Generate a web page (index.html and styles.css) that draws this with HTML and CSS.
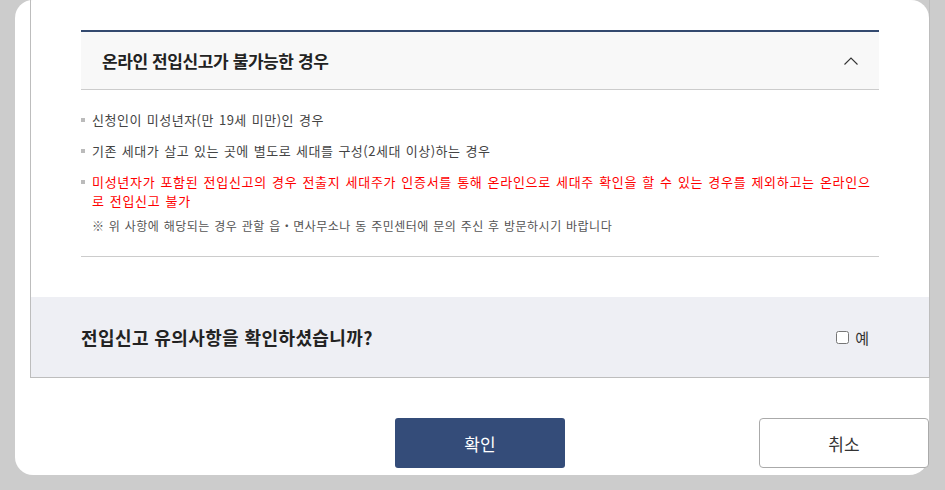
FILE: index.html
```html
<!DOCTYPE html>
<html lang="ko">
<head>
    <meta charset="UTF-8">
    <meta name="viewport" content="width=device-width, initial-scale=1.0">
    <title>전입신고 유의사항</title>
    <link rel="stylesheet" href="styles.css">
</head>
<body>
    <div class="modal">
        <div class="scroll-box">
            <div class="notice">
                <!-- Accordion header -->
                <div class="acc-head">
                    <h3 class="acc-title">온라인 전입신고가 불가능한 경우</h3>
                    <svg class="acc-arrow" width="14" height="8" viewBox="0 0 14 8">
                        <polyline points="0.5,7.5 7,1 13.5,7.5" fill="none" stroke="#333" stroke-width="1.1"/>
                    </svg>
                </div>

                <!-- Accordion body -->
                <div class="acc-body">
                    <ul class="case-list">
                        <li>신청인이 미성년자(만 19세 미만)인 경우</li>
                        <li>기존 세대가 살고 있는 곳에 별도로 세대를 구성(2세대 이상)하는 경우</li>
                        <li class="warn">미성년자가 포함된 전입신고의 경우 전출지 세대주가 인증서를 통해 온라인으로 세대주 확인을 할 수 있는 경우를 제외하고는 온라인으로 전입신고 불가</li>
                    </ul>
                    <p class="case-note">※ 위 사항에 해당되는 경우 관할 읍・면사무소나 동 주민센터에 문의 주신 후 방문하시기 바랍니다</p>
                </div>
            </div>

            <div class="confirm">
                <p class="confirm-text">전입신고 유의사항을 확인하셨습니까?</p>
                <label class="confirm-check">
                    <input type="checkbox">
                    <span>예</span>
                </label>
            </div>
        </div>

        <div class="btn-row">
            <button class="btn btn-ok" type="button">확인</button>
            <button class="btn btn-cancel" type="button">취소</button>
        </div>
    </div>
</body>
</html>
```

FILE: styles.css
```css
* {
    margin: 0;
    padding: 0;
    box-sizing: border-box;
}

html, body {
    font-family: "Noto Sans CJK KR", "Noto Sans", sans-serif;
    background: #cccccc;
    color: #333;
    overflow: hidden;
}

.modal {
    margin: 15px 0 0 15px;
    width: 914px;
    background: #fff;
    border-radius: 18px 18px 20px 18px;
    padding-bottom: 7px;
}

/* inner scrolled area, its top runs past the modal edge */
.scroll-box {
    margin: -15px 0 0 15px;
    width: 900px;
    border: 1px solid #bdbdbd;
    border-top: none;
}

.notice {
    padding: 30px 50px 40px;
}

.acc-head {
    display: flex;
    align-items: center;
    justify-content: space-between;
    height: 60px;
    padding: 0 21px;
    background: #f8f8f8;
    border-top: 2px solid #33496f;
    border-bottom: 1px solid #cccccc;
}

.acc-title {
    font-size: 17px;
    font-weight: 700;
    color: #222;
    letter-spacing: -0.4px;
}

.acc-arrow {
    display: block;
}

.acc-body {
    padding: 20px 0 22px;
    border-bottom: 1px solid #cccccc;
}

.case-list {
    list-style: none;
}

.case-list li {
    display: flex;
    gap: 7px;
    font-size: 13px;
    line-height: 19px;
    letter-spacing: 0.5px;
    word-spacing: 0.8px;
    color: #444;
}

.case-list li + li {
    margin-top: 12px;
}

.case-list li::before {
    content: "";
    flex-shrink: 0;
    width: 4px;
    height: 4px;
    margin-top: 7.5px;
    background: #bbbbbb;
}

.case-list li.warn {
    color: #ff0000;
    letter-spacing: 0.7px;
    word-break: break-all;
}

.case-note {
    margin-top: 7px;
    padding-left: 11px;
    font-size: 12px;
    line-height: 17px;
    letter-spacing: 0.5px;
    word-spacing: 0.5px;
    color: #555;
}

.confirm {
    display: flex;
    align-items: center;
    justify-content: space-between;
    height: 80px;
    padding: 0 60px 0 50px;
    background: #eeeff4;
}

.confirm-text {
    font-size: 18px;
    font-weight: 700;
    letter-spacing: 0.4px;
    color: #222;
}

.confirm-check {
    display: flex;
    align-items: center;
    gap: 6px;
    font-size: 15px;
    color: #333;
}

.confirm-check input {
    margin: 0;
    width: 13px;
    height: 13px;
}

.btn-row {
    display: flex;
    margin-top: 40px;
    padding-left: 380px;
}

.btn {
    width: 170px;
    height: 50px;
    font-family: inherit;
    font-size: 17px;
    cursor: pointer;
}

.btn-ok {
    background: #344c79;
    color: #fff;
    border: none;
    border-radius: 3px;
}

.btn-cancel {
    margin-left: auto;
    background: #fff;
    color: #333;
    border: 1px solid #aaaaaa;
    border-radius: 4px;
}
```
